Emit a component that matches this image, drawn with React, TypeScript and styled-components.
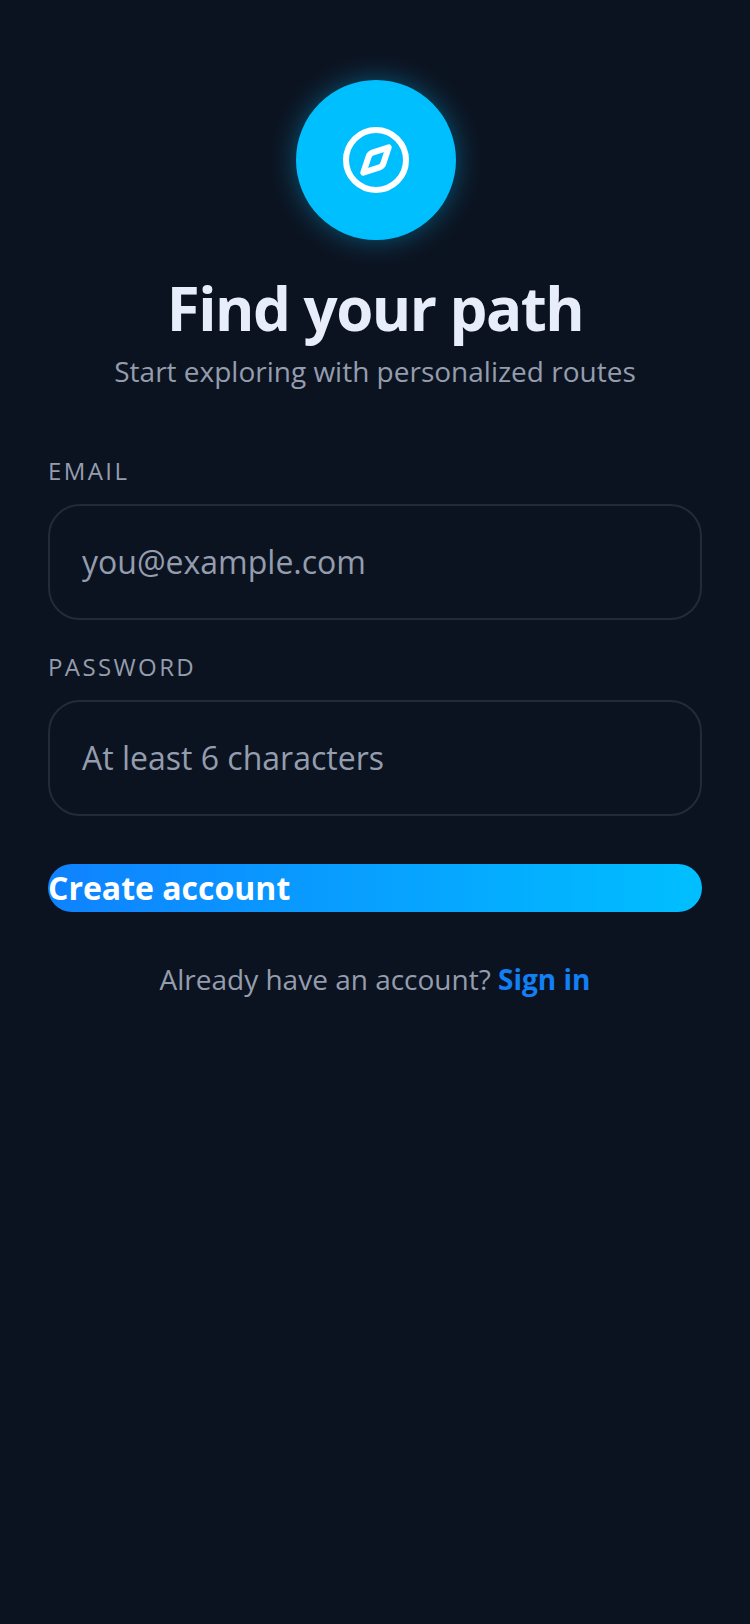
import React from "react";
import styled, { createGlobalStyle } from "styled-components";
import { Compass } from "lucide-react";

const Global = createGlobalStyle`
  html, body { margin: 0; padding: 0; background: #0c1320; }
  * { box-sizing: border-box; }
  input::placeholder { color: #949dae; opacity: 1; }
`;

const Page = styled.div`
  width: 750px;
  min-height: 1624px;
  background: #0c1320;
  padding: 80px 48px 0;
  display: flex;
  flex-direction: column;
  font-family: "Open Sans", sans-serif;
`;

const Hero = styled.header`
  display: flex;
  flex-direction: column;
  align-items: center;
`;

const Badge = styled.div`
  width: 160px;
  height: 160px;
  margin-left: 2px;
  border-radius: 50%;
  background: #00bfff;
  box-shadow: 0 0 28px rgba(0, 191, 255, 0.4);
  display: flex;
  align-items: center;
  justify-content: center;
  color: #fff;
`;

const Title = styled.h1`
  margin: 32px 0 0;
  font-size: 60px;
  line-height: 72px;
  font-weight: 700;
  letter-spacing: -1.5px;
  color: #e8eef9;
  text-align: center;
`;

const Subtitle = styled.p`
  margin: 8px 0 0;
  font-size: 28px;
  line-height: 38px;
  font-weight: 400;
  color: #949dae;
  text-align: center;
`;

const Form = styled.form`
  margin-top: 64px;
  display: flex;
  flex-direction: column;
`;

const Field = styled.div`
  display: flex;
  flex-direction: column;
  margin-bottom: 30px;
`;

const Label = styled.label`
  font-size: 24px;
  line-height: 34px;
  letter-spacing: 2.4px;
  color: #949dae;
  margin-bottom: 16px;
  text-transform: uppercase;
`;

const Input = styled.input`
  width: 100%;
  height: 116px;
  padding: 0 32px 2px;
  border: 2px solid #232b3a;
  border-radius: 32px;
  background: #0c1320;
  font-family: inherit;
  font-size: 32px;
  color: #e8eef9;
  outline: none;
`;

const Submit = styled.button`
  margin-top: 18px;
  width: 100%;
  height: 48px;
  padding: 0 0 2px;
  border: none;
  border-radius: 24px;
  background: linear-gradient(90deg, #0f82ff, #00bfff);
  color: #fff;
  font-family: inherit;
  font-size: 32px;
  font-weight: 700;
  text-align: left;
`;

const Footer = styled.p`
  margin: 48px 0 0;
  font-size: 28px;
  line-height: 38px;
  color: #949dae;
  text-align: center;
`;

const SignIn = styled.span`
  color: #127ff5;
  font-weight: 700;
`;

export default function App() {
  return (
    <Page>
      <Global />
      <Hero>
        <Badge>
          <Compass size={72} strokeWidth={2} />
        </Badge>
        <Title>Find your path</Title>
        <Subtitle>Start exploring with personalized routes</Subtitle>
      </Hero>
      <Form>
        <Field>
          <Label>Email</Label>
          <Input placeholder="you@example.com" />
        </Field>
        <Field>
          <Label>Password</Label>
          <Input placeholder="At least 6 characters" />
        </Field>
        <Submit type="button">Create account</Submit>
      </Form>
      <Footer>
        Already have an account? <SignIn>Sign in</SignIn>
      </Footer>
    </Page>
  );
}
